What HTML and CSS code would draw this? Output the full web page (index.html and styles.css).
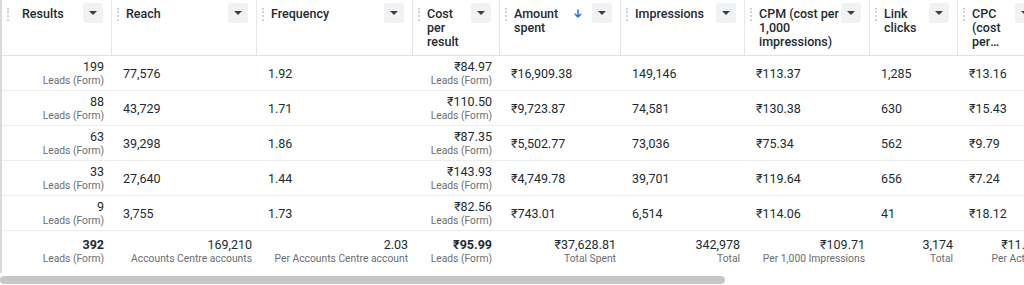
FILE: index.html
```html
<!DOCTYPE html>
<html lang="en">
<head>
    <meta charset="UTF-8">
    <meta name="viewport" content="width=device-width, initial-scale=1.0">
    <title>Ads report</title>
    <link rel="stylesheet" href="styles.css">
</head>
<body>
    <div class="report">
        <div class="grid-wrap">
            <table class="grid">
                <colgroup>
                    <col class="c-results">
                    <col class="c-reach">
                    <col class="c-freq">
                    <col class="c-cost">
                    <col class="c-spent">
                    <col class="c-impr">
                    <col class="c-cpm">
                    <col class="c-clicks">
                    <col class="c-cpc">
                </colgroup>
                <thead>
                    <tr>
                        <th class="first"><span class="handle"></span><div class="label">Results</div><span class="menu"></span></th>
                        <th><span class="handle"></span><div class="label">Reach</div><span class="menu"></span></th>
                        <th><span class="handle"></span><div class="label">Frequency</div><span class="menu"></span></th>
                        <th><span class="handle"></span><div class="label">Cost per result</div><span class="menu"></span></th>
                        <th class="sorted"><span class="handle"></span><div class="label">Amount spent</div>
                            <svg class="sort" width="8" height="10" viewBox="0 0 8 10"><path d="M4 1v7M1.2 5.2L4 8l2.8-2.8" fill="none" stroke="#1877f2" stroke-width="1.5" stroke-linecap="round" stroke-linejoin="round"/></svg>
                            <span class="menu"></span></th>
                        <th><span class="handle"></span><div class="label">Impressions</div><span class="menu"></span></th>
                        <th><span class="handle"></span><div class="label">CPM (cost per 1,000 impressions)</div><span class="menu"></span></th>
                        <th><span class="handle"></span><div class="label">Link clicks</div><span class="menu"></span></th>
                        <th><span class="handle"></span><div class="label">CPC (cost per link click)</div><span class="menu"></span></th>
                    </tr>
                </thead>
                <tbody>
                    <tr>
                        <td class="num"><div>199</div><div class="sub">Leads (Form)</div></td>
                        <td>77,576</td>
                        <td>1.92</td>
                        <td class="num"><div>₹84.97</div><div class="sub">Leads (Form)</div></td>
                        <td>₹16,909.38</td>
                        <td>149,146</td>
                        <td>₹113.37</td>
                        <td>1,285</td>
                        <td>₹13.16</td>
                    </tr>
                    <tr>
                        <td class="num"><div>88</div><div class="sub">Leads (Form)</div></td>
                        <td>43,729</td>
                        <td>1.71</td>
                        <td class="num"><div>₹110.50</div><div class="sub">Leads (Form)</div></td>
                        <td>₹9,723.87</td>
                        <td>74,581</td>
                        <td>₹130.38</td>
                        <td>630</td>
                        <td>₹15.43</td>
                    </tr>
                    <tr>
                        <td class="num"><div>63</div><div class="sub">Leads (Form)</div></td>
                        <td>39,298</td>
                        <td>1.86</td>
                        <td class="num"><div>₹87.35</div><div class="sub">Leads (Form)</div></td>
                        <td>₹5,502.77</td>
                        <td>73,036</td>
                        <td>₹75.34</td>
                        <td>562</td>
                        <td>₹9.79</td>
                    </tr>
                    <tr>
                        <td class="num"><div>33</div><div class="sub">Leads (Form)</div></td>
                        <td>27,640</td>
                        <td>1.44</td>
                        <td class="num"><div>₹143.93</div><div class="sub">Leads (Form)</div></td>
                        <td>₹4,749.78</td>
                        <td>39,701</td>
                        <td>₹119.64</td>
                        <td>656</td>
                        <td>₹7.24</td>
                    </tr>
                    <tr>
                        <td class="num"><div>9</div><div class="sub">Leads (Form)</div></td>
                        <td>3,755</td>
                        <td>1.73</td>
                        <td class="num"><div>₹82.56</div><div class="sub">Leads (Form)</div></td>
                        <td>₹743.01</td>
                        <td>6,514</td>
                        <td>₹114.06</td>
                        <td>41</td>
                        <td>₹18.12</td>
                    </tr>
                </tbody>
                <tfoot>
                    <tr>
                        <td class="num key"><div class="strong">392</div><div class="sub">Leads (Form)</div></td>
                        <td><div>169,210</div><div class="sub">Accounts Centre accounts</div></td>
                        <td><div>2.03</div><div class="sub">Per Accounts Centre account</div></td>
                        <td class="num key"><div class="strong">₹95.99</div><div class="sub">Leads (Form)</div></td>
                        <td><div>₹37,628.81</div><div class="sub">Total Spent</div></td>
                        <td><div>342,978</div><div class="sub">Total</div></td>
                        <td><div>₹109.71</div><div class="sub">Per 1,000 Impressions</div></td>
                        <td><div>3,174</div><div class="sub">Total</div></td>
                        <td><div>₹11.86</div><div class="sub">Per Action</div></td>
                    </tr>
                </tfoot>
            </table>
        </div>
        <div class="scrollbar"><div class="thumb"></div></div>
    </div>
</body>
</html>
```

FILE: styles.css
```css
body {
    font-family: Roboto, "Noto Sans", "DejaVu Sans", sans-serif;
    margin: 0;
    padding: 0;
    background-color: #fff;
    color: #1c2b33;
}
.report {
    width: 1024px;
    height: 285px;
    overflow: hidden;
}
.grid-wrap {
    border-left: 2px solid #d8dadd;
    overflow: hidden;
    height: 273px;
}
.grid {
    table-layout: fixed;
    border-collapse: separate;
    border-spacing: 0;
    width: 1042px;
    font-size: 12.5px;
}
.c-results { width: 110px; }
.c-reach { width: 145px; }
.c-freq { width: 156px; }
.c-cost { width: 87px; }
.c-spent { width: 121px; }
.c-impr { width: 124px; }
.c-cpm { width: 125px; }
.c-clicks { width: 88px; }
.c-cpc { width: 86px; }
th {
    position: relative;
    height: 56px;
    box-sizing: border-box;
    padding: 7px 30px 0 14px;
    vertical-align: top;
    text-align: left;
    font-weight: 500;
    line-height: 14px;
    border-right: 1px solid #e4e6e9;
    border-bottom: 1px solid #dfe1e4;
}
th.first {
    padding-left: 20px;
}
th.sorted {
    padding-right: 48px;
}
.label {
    display: -webkit-box;
    -webkit-line-clamp: 3;
    -webkit-box-orient: vertical;
    overflow: hidden;
}
.handle {
    position: absolute;
    left: 5px;
    top: 8px;
    height: 13px;
    border-left: 2px dotted #cfd2d6;
}
.menu {
    position: absolute;
    top: 3px;
    right: 8px;
    width: 20px;
    height: 20px;
    border-radius: 3px;
    background-color: #f1f2f4;
}
.menu::after {
    content: "";
    position: absolute;
    left: 6px;
    top: 8px;
    border-top: 4px solid #3c4043;
    border-left: 4px solid transparent;
    border-right: 4px solid transparent;
}
.sort {
    position: absolute;
    top: 9px;
    right: 38px;
}
td {
    height: 34px;
    padding: 0 8px 0 11px;
    line-height: 15px;
    white-space: nowrap;
    border-bottom: 1px solid #eceef0;
    vertical-align: middle;
}
td.num {
    text-align: right;
}
.sub {
    font-size: 10.3px;
    line-height: 14px;
    color: #6a6d72;
}
tfoot td {
    height: 41px;
    padding: 6px 5px 0 8px;
    vertical-align: top;
    text-align: right;
    border-bottom: none;
}
tfoot td.key {
    padding-right: 8px;
}
.strong {
    font-weight: 700;
}
.scrollbar {
    height: 12px;
    padding-top: 3px;
    box-sizing: border-box;
}
.thumb {
    width: 725px;
    height: 8px;
    border-radius: 4px;
    background-color: #c6c7c9;
}
```
